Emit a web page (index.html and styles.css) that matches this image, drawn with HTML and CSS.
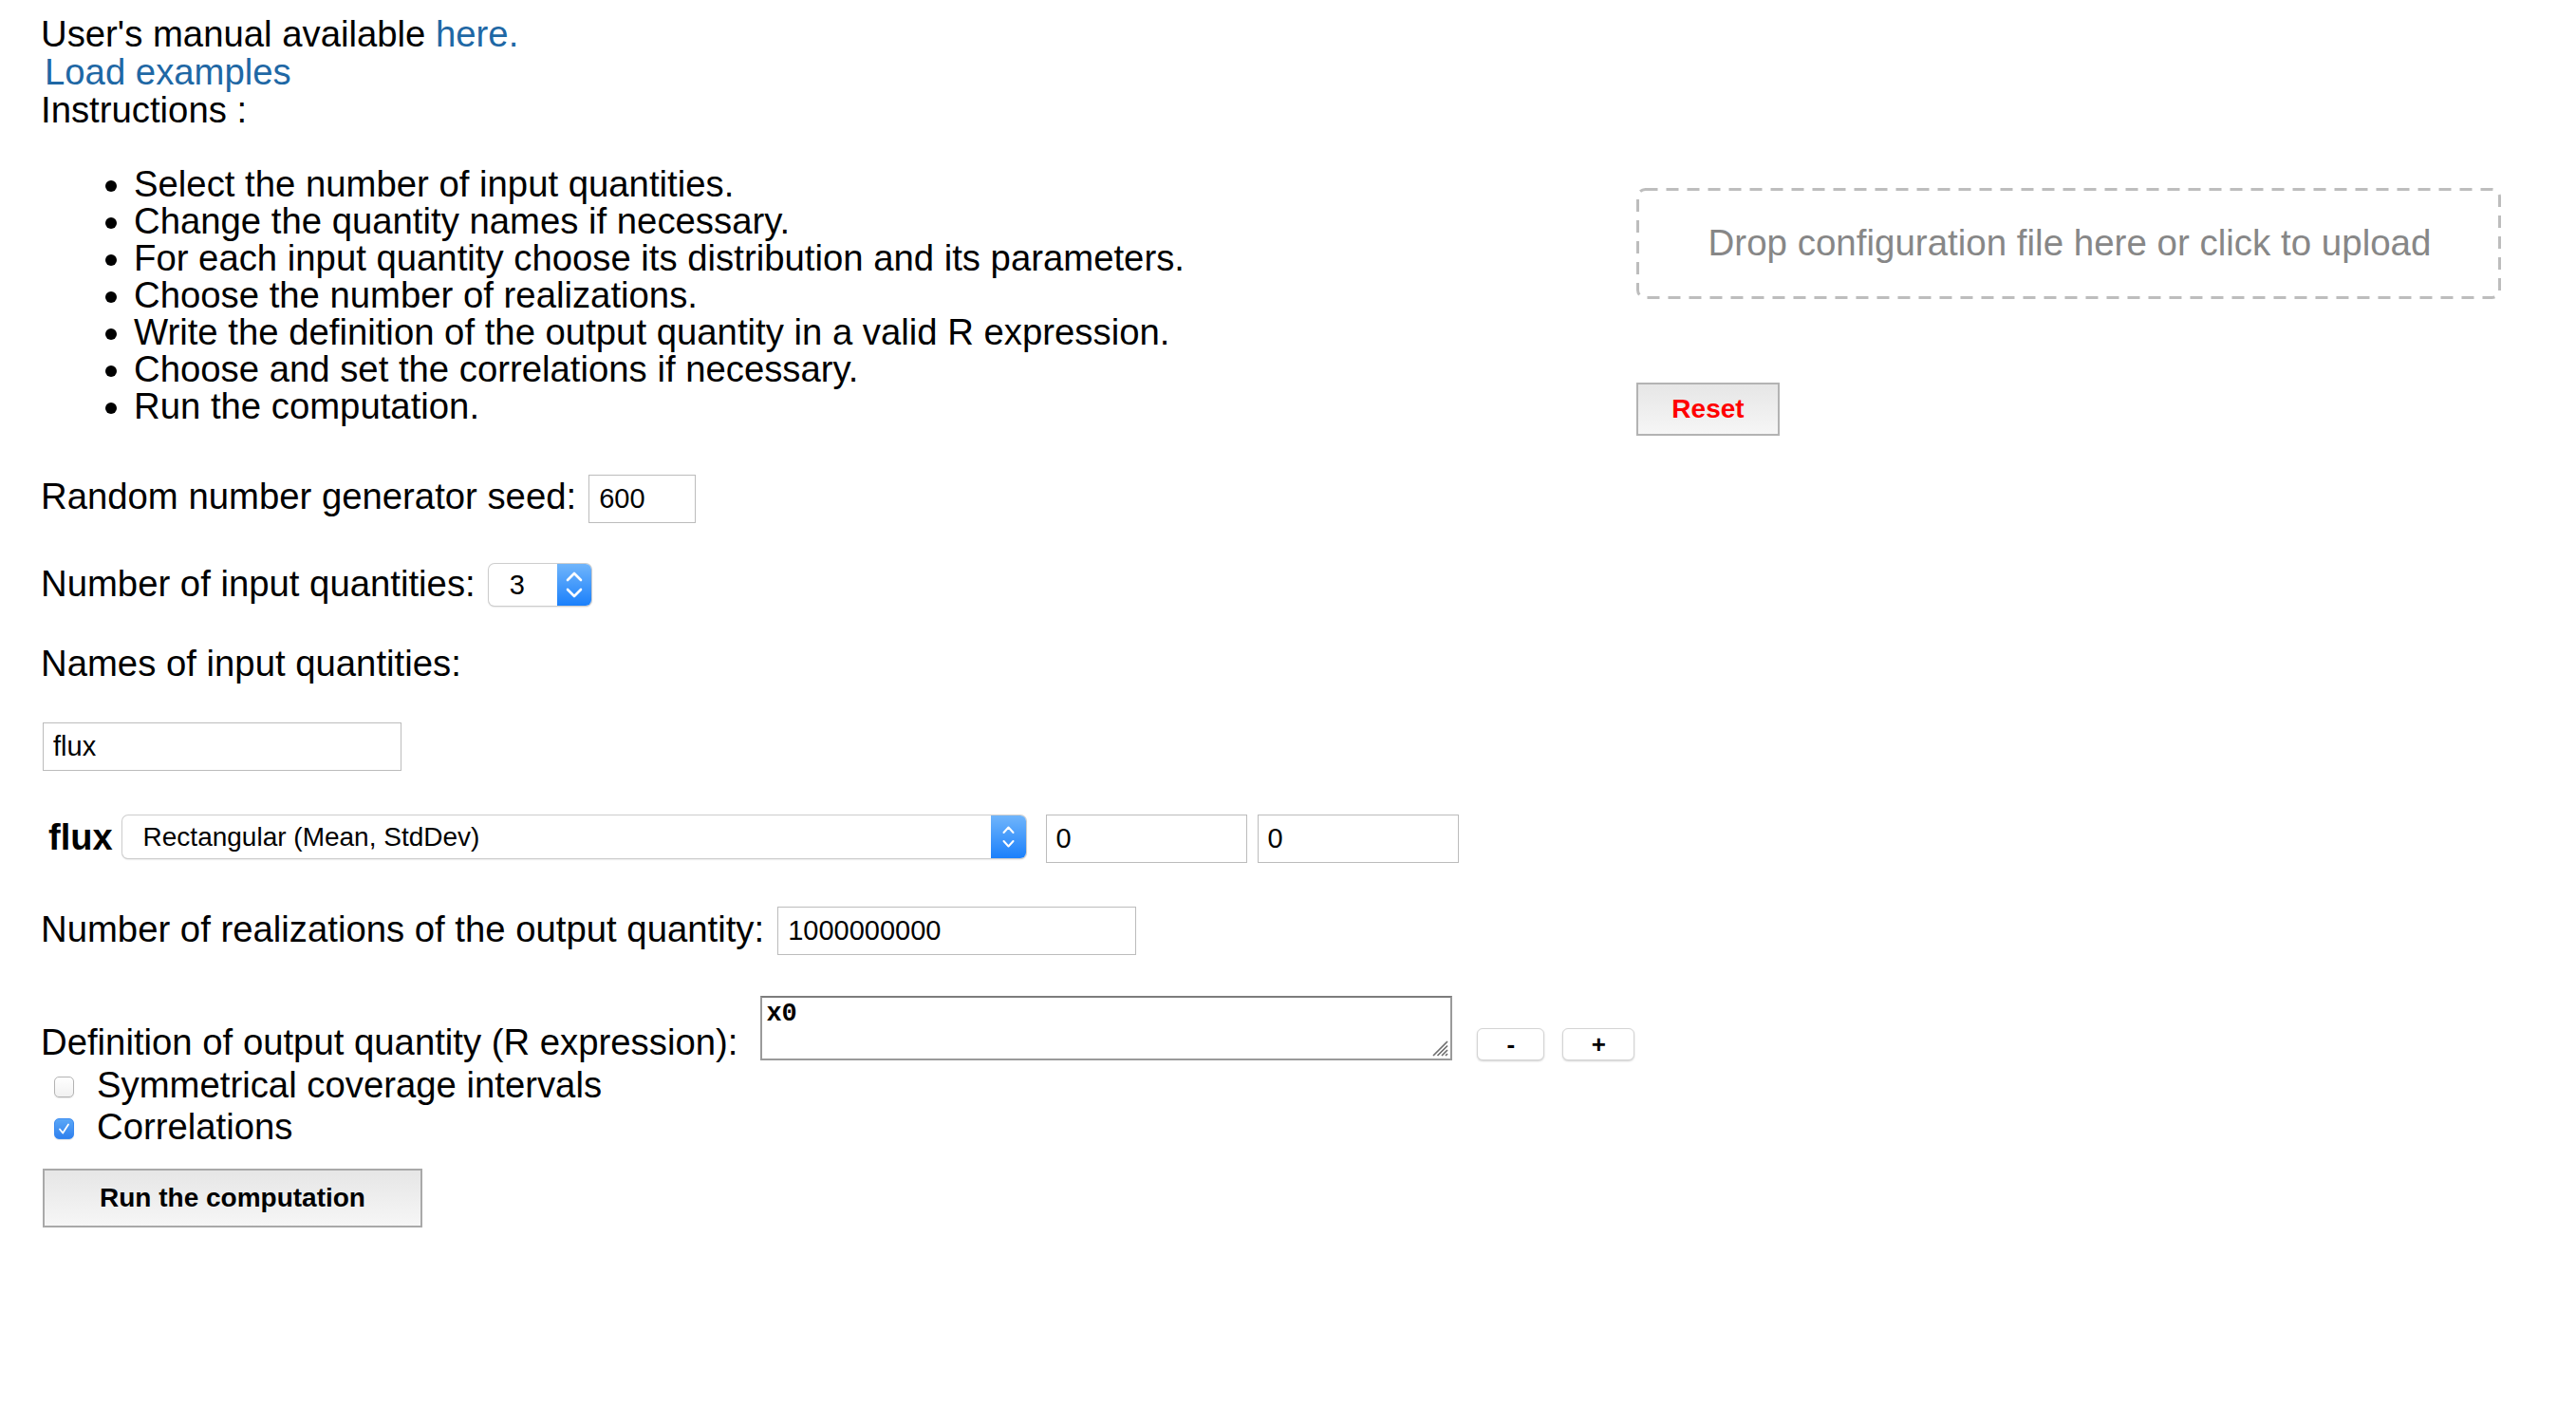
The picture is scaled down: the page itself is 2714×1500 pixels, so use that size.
FILE: index.html
```html
<!DOCTYPE html>
<html lang="en">
<head>
<meta charset="utf-8">
<title>Monte Carlo uncertainty</title>
<link rel="stylesheet" href="styles.css">
</head>
<body>
<div class="page">
  <div class="top">
    <div class="intro">
      <div class="line">User's manual available <a href="#">here.</a></div>
      <div class="line"><a class="load" href="#">Load examples</a></div>
      <div class="line">Instructions :</div>
      <ul class="steps">
        <li>Select the number of input quantities.</li>
        <li>Change the quantity names if necessary.</li>
        <li>For each input quantity choose its distribution and its parameters.</li>
        <li>Choose the number of realizations.</li>
        <li>Write the definition of the output quantity in a valid R expression.</li>
        <li>Choose and set the correlations if necessary.</li>
        <li>Run the computation.</li>
      </ul>
    </div>
    <div class="side">
      <div class="drop">
        <svg class="drop-frame" width="911" height="117" viewBox="0 0 911 117"><rect x="1.5" y="1.5" width="908" height="114" rx="8" ry="8" fill="none" stroke="#bdbdbd" stroke-width="3" stroke-dasharray="13 9"/></svg>
        <span class="drop-text">Drop configuration file here or click to upload</span>
      </div>
      <button class="btn reset" type="button">Reset</button>
    </div>
  </div>

  <div class="row seed-row">
    <label class="lbl lbl-seed" for="seed">Random number generator seed:</label>
    <input id="seed" class="inp inp-seed" type="text" value="600">
  </div>

  <div class="row num-row">
    <label class="lbl lbl-num" for="nq">Number of input quantities:</label>
    <span class="sel sel-small">
      <select id="nq"><option>3</option></select>
      <span class="stepper">
        <svg width="36" height="44" viewBox="0 0 36 44"><path d="M11 17 L18 10 L25 17" fill="none" stroke="#fff" stroke-width="2.6" stroke-linecap="round" stroke-linejoin="round"/><path d="M11 27 L18 34 L25 27" fill="none" stroke="#fff" stroke-width="2.6" stroke-linecap="round" stroke-linejoin="round"/></svg>
      </span>
    </span>
  </div>

  <div class="line names-line">Names of input quantities:</div>
  <input class="inp inp-name" type="text" value="flux">

  <div class="row flux-row">
    <span class="qname">flux</span>
    <span class="sel sel-big">
      <select><option>Rectangular (Mean, StdDev)</option></select>
      <span class="stepper">
        <svg width="37" height="45" viewBox="0 0 37 45"><path d="M13.5 18 L18.5 12.5 L23.5 18" fill="none" stroke="#fff" stroke-width="2" stroke-linecap="round" stroke-linejoin="round"/><path d="M13.5 27 L18.5 32.5 L23.5 27" fill="none" stroke="#fff" stroke-width="2" stroke-linecap="round" stroke-linejoin="round"/></svg>
      </span>
    </span>
    <input class="inp inp-par inp-par1" type="text" value="0">
    <input class="inp inp-par inp-par2" type="text" value="0">
  </div>

  <div class="row real-row">
    <label class="lbl lbl-real" for="nreal">Number of realizations of the output quantity:</label>
    <input id="nreal" class="inp inp-real" type="text" value="1000000000">
  </div>

  <div class="row def-row">
    <label class="lbl lbl-def" for="expr">Definition of output quantity (R expression):</label>
    <span class="expr-wrap">
      <textarea id="expr" class="expr">x0</textarea>
      <svg class="grip" width="18" height="18" viewBox="0 0 18 18"><path d="M17 2 L2 17 M17 6.5 L6.5 17 M17 11 L11 17 M17 15 L15 17" stroke="#6e6e6e" stroke-width="1.7" fill="none"/></svg>
    </span>
    <button class="mini mini-minus" type="button">-</button>
    <button class="mini mini-plus" type="button">+</button>
  </div>

  <div class="check check-first">
    <span class="box"></span>
    <span class="check-label">Symmetrical coverage intervals</span>
  </div>
  <div class="check">
    <span class="box box-on"><svg width="21" height="22" viewBox="0 0 21 22"><path d="M6 11.5 L9.2 15.5 L15 6.5" fill="none" stroke="#fff" stroke-width="1.8" stroke-linecap="round" stroke-linejoin="round"/></svg></span>
    <span class="check-label">Correlations</span>
  </div>

  <button class="btn run" type="button">Run the computation</button>
</div>
</body>
</html>
```

FILE: styles.css
```css
html, body {
  margin: 0;
  padding: 0;
  background: #ffffff;
}

body {
  font-family: "Liberation Sans", Arial, Helvetica, sans-serif;
  font-size: 38.3px;
  line-height: 40px;
  color: #000000;
}

.page {
  padding: 16px 0 80px 43px;
}

a {
  color: #1f68a5;
  text-decoration: none;
}

.load {
  padding-left: 4px;
}

.top {
  display: grid;
  grid-template-columns: 1681px 912px;
  align-items: start;
}

.line {
  line-height: 40px;
}

.steps {
  margin: 38px 0 0 0;
  padding: 0 0 0 98px;
  line-height: 39px;
}

.side {
  padding-top: 182px;
}

.drop {
  position: relative;
  box-sizing: border-box;
  width: 911px;
  height: 117px;
  display: flex;
  align-items: center;
  justify-content: center;
  color: #878787;
  font-size: 38.5px;
}

.drop-frame {
  position: absolute;
  left: 0;
  top: 0;
}

.drop-text {
  position: relative;
  top: -1px;
  left: 1px;
}

.btn {
  box-sizing: border-box;
  display: block;
  font-family: "Liberation Sans", Arial, Helvetica, sans-serif;
  font-weight: bold;
  font-size: 28px;
  background: linear-gradient(to bottom, #e6e6e6, #f6f6f6);
  border: 2px solid #b3b3b3;
  border-radius: 0;
  padding: 0;
  color: #000;
}

.reset {
  margin-top: 88px;
  width: 151px;
  height: 56px;
  color: #ff0000;
}

.run {
  margin: 23px 0 0 2px;
  width: 400px;
  height: 62px;
  border-color: #a9a9a9;
}

.row {
  display: flex;
  align-items: flex-start;
  line-height: 40px;
}

.lbl {
  white-space: nowrap;
}

.inp {
  box-sizing: border-box;
  height: 51px;
  border: 1px solid #bcbcbc;
  border-radius: 0;
  padding: 0 10px;
  font-family: "Liberation Sans", Arial, Helvetica, sans-serif;
  font-size: 29px;
  color: #000;
  background: #fff;
  outline: none;
}

.seed-row {
  margin-top: 41px;
}

.lbl-seed {
  margin-top: 3px;
}

.inp-seed {
  margin-left: 13px;
  width: 113px;
}

.num-row {
  margin-top: 43px;
}

.lbl-num {
  margin-top: 1px;
}

.sel {
  display: flex;
  box-sizing: border-box;
  border-radius: 6px;
  box-shadow: 0 0 0 1px #cdcdcd, 0 1px 2px rgba(0, 0, 0, 0.25);
  background: #fff;
  overflow: hidden;
}

.sel select {
  appearance: none;
  -webkit-appearance: none;
  border: none;
  background: transparent;
  flex: 1;
  margin: 0;
  font-family: "Liberation Sans", Arial, Helvetica, sans-serif;
  color: #000;
  outline: none;
}

.stepper {
  display: block;
  background: linear-gradient(to bottom, #70b5fb, #1b80fb);
}

.stepper svg {
  display: block;
}

.sel-small {
  margin-left: 14px;
  width: 108px;
  height: 44px;
}

.sel-small select {
  font-size: 29px;
  padding: 0 0 0 22px;
  height: 44px;
}

.names-line {
  margin-top: 41px;
}

.inp-name {
  display: block;
  margin: 42px 0 0 2px;
  width: 378px;
}

.flux-row {
  margin-top: 46px;
}

.qname {
  font-weight: bold;
  font-size: 38px;
  margin: 4px 0 0 8px;
}

.sel-big {
  margin: 1px 0 0 10px;
  width: 952px;
  height: 45px;
}

.sel-big select {
  font-size: 28px;
  padding: 0 0 0 22px;
  height: 45px;
}

.inp-par {
  width: 212px;
}

.inp-par1 {
  margin-left: 21px;
}

.inp-par2 {
  margin-left: 11px;
}

.real-row {
  margin-top: 46px;
}

.lbl-real {
  margin-top: 4px;
}

.inp-real {
  margin-left: 14px;
  width: 378px;
}

.def-row {
  margin-top: 43px;
  align-items: flex-end;
}

.lbl-def {
  position: relative;
  top: 1px;
}

.expr-wrap {
  position: relative;
  display: block;
  margin-left: 24px;
  width: 729px;
  height: 68px;
}

.expr {
  display: block;
  box-sizing: border-box;
  margin: 0;
  width: 729px;
  height: 68px;
  border: 2px solid #9a9a9a;
  border-top-color: #7c7c7c;
  padding: 2px 4px;
  font-family: "Liberation Mono", "Courier New", monospace;
  font-weight: bold;
  font-size: 27px;
  line-height: 30px;
  color: #000;
  background: #fff;
  outline: none;
  resize: none;
}

.grip {
  position: absolute;
  right: 4px;
  bottom: 4px;
}

.mini {
  box-sizing: border-box;
  height: 34px;
  padding: 0;
  margin: 0;
  background: #fff;
  border: 1px solid #d4d4d4;
  border-radius: 6px;
  box-shadow: 0 1px 2px rgba(0, 0, 0, 0.18);
  font-family: "Liberation Sans", Arial, Helvetica, sans-serif;
  font-size: 26px;
  font-weight: bold;
  color: #000;
}

.mini-minus {
  margin-left: 26px;
  width: 71px;
}

.mini-plus {
  margin-left: 19px;
  width: 76px;
}

.check {
  display: flex;
  align-items: flex-start;
  line-height: 44px;
}

.check-first {
  margin-top: 3px;
}

.box {
  box-sizing: border-box;
  display: block;
  width: 21px;
  height: 22px;
  margin: 14px 0 0 14px;
  border: 1px solid #b3b3b3;
  border-radius: 5px;
  background: linear-gradient(to bottom, #ffffff, #f1f1f1);
  box-shadow: 0 1px 1px rgba(0, 0, 0, 0.1);
}

.box svg {
  display: block;
  margin: -1px 0 0 -1px;
}

.box-on {
  border-color: #3a8af0;
  background: linear-gradient(to bottom, #5aa7f7, #2f80ee);
}

.check-label {
  position: relative;
  top: 1px;
  margin-left: 24px;
}
```
